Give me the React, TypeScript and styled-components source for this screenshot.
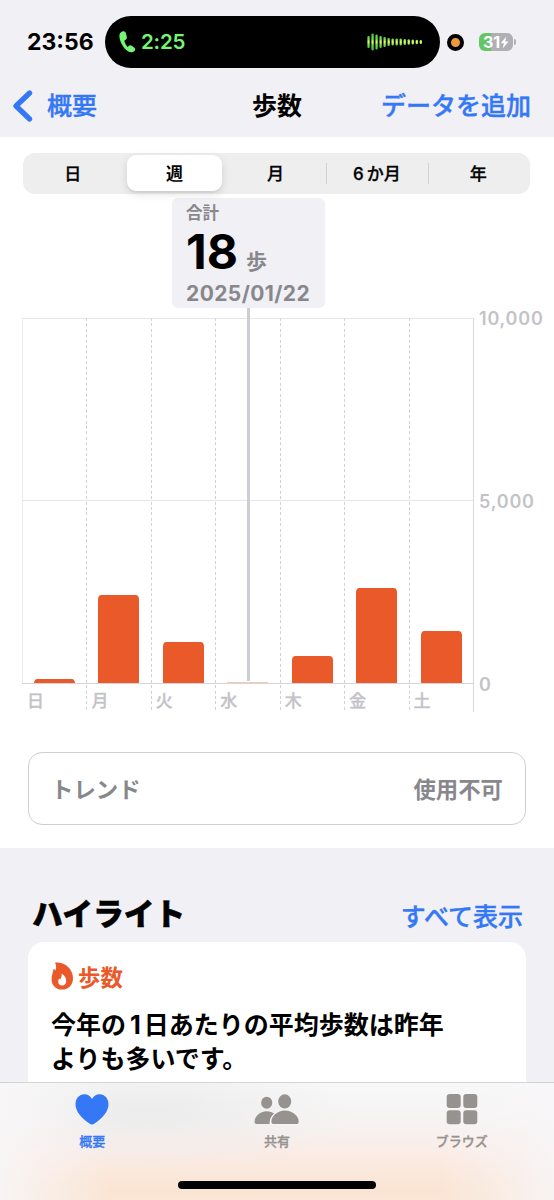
import React from 'react';
import styled, { createGlobalStyle } from 'styled-components';

const Global = createGlobalStyle`
  * { box-sizing: border-box; }
  body { margin: 0; background: #fff; }
`;

const C = {
  blue: '#3478f6',
  orange: '#ea592a',
  grey: '#88888c',
  light: '#c3c3c7',
  surface: '#f0f0f5',
};

const Screen = styled.div`
  width: 554px;
  height: 1200px;
  position: relative;
  overflow: hidden;
  display: flex;
  flex-direction: column;
  background: #fff;
  color: #000;
  font-family: Inter, 'Noto Sans CJK JP', sans-serif;
  white-space: nowrap;
`;

const Header = styled.header`
  flex: none;
  height: 137px;
  background: ${C.surface};
`;

const StatusBar = styled.div`
  display: flex;
  align-items: center;
  height: 68px;
  padding-top: 16px;
`;

const Clock = styled.div`
  width: 105px;
  padding-left: 27px;
  font-size: 23px;
  line-height: 28px;
  font-weight: 700;
`;

const Island = styled.div`
  width: 335px;
  height: 52px;
  border-radius: 26px;
  background: #000;
  display: flex;
  align-items: center;
  padding: 0 17px 0 14px;
`;

const CallTime = styled.span`
  margin-left: 5px;
  color: #76f575;
  font-size: 20.5px;
  line-height: 26px;
  padding-bottom: 1px;
  font-weight: 600;
  letter-spacing: -0.2px;
  flex: 1;
`;

const RecordDot = styled.div`
  width: 17px;
  height: 17px;
  margin-left: 7px;
  border-radius: 50%;
  border: 4px solid #000;
  background: #f09a37;
`;

const Battery = styled.div`
  width: 34px;
  height: 18px;
  margin-left: 15px;
  border-radius: 6px;
  background: linear-gradient(90deg, #65c466 0 12px, #b0b0b4 12px);
  color: #fff;
  display: flex;
  align-items: center;
  padding-left: 4px;
  font-size: 16px;
  font-weight: 700;
  line-height: 18px;
`;

const BatteryTip = styled.div`
  width: 2px;
  height: 6px;
  margin-left: 1px;
  border-radius: 0 2px 2px 0;
  background: #b0b0b4;
`;

const NavBar = styled.nav`
  display: grid;
  grid-template-columns: 1fr auto 1fr;
  align-items: center;
  height: 69px;
  padding: 7px 13px 0;
  font-size: 25px;
  line-height: 36px;
`;

const NavLink = styled.a<{ $end?: boolean }>`
  display: flex;
  align-items: center;
  gap: 14px;
  justify-self: ${(p) => (p.$end ? 'end' : 'start')};
  margin-right: ${(p) => (p.$end ? '10px' : '0')};
  color: ${C.blue};
  font-weight: 500;
  -webkit-text-stroke: 0.4px ${C.blue};
`;

const NavTitle = styled.h1`
  margin: 0;
  font-size: 25px;
  line-height: 36px;
  font-weight: 700;
`;

const Segments = styled.div`
  flex: none;
  display: grid;
  grid-template-columns: repeat(5, 1fr);
  width: 507px;
  height: 41px;
  margin: 16px 0 0 23px;
  border-radius: 12px;
  background: #eeeeef;
`;

const Segment = styled.button<{ $active?: boolean; $divider?: boolean }>`
  position: relative;
  display: flex;
  align-items: center;
  justify-content: center;
  margin: ${(p) => (p.$active ? '2px 4px 3px 3px' : '0')};
  padding: ${(p) => (p.$active ? '2px 0 0' : '1px 2px 0 0')};
  border: 0;
  border-radius: 9px;
  background: ${(p) => (p.$active ? '#fff' : 'transparent')};
  box-shadow: ${(p) => (p.$active ? '0 3px 8px rgba(0,0,0,.12), 0 2px 1px rgba(0,0,0,.04)' : 'none')};
  color: #000;
  font: ${(p) => (p.$active ? 700 : 500)} 17px/24px Inter, 'Noto Sans CJK JP', sans-serif;
  -webkit-text-stroke: ${(p) => (p.$active ? '0' : '0.3px #000')};
  &::before {
    content: '';
    display: ${(p) => (p.$divider ? 'block' : 'none')};
    position: absolute;
    left: -1px;
    top: 10px;
    width: 1px;
    height: 21px;
    background: #d2d2d5;
  }
`;

const Digit = styled.span<{ $before?: number; $after: number }>`
  margin: 0 ${(p) => p.$after}px 0 ${(p) => p.$before ?? 0}px;
`;

const Callout = styled.div`
  flex: none;
  width: 153px;
  height: 110px;
  margin: 4px 0 0 172px;
  padding: 5px 0 0 14px;
  border-radius: 6px;
  background: ${C.surface};
  color: ${C.grey};
  font-weight: 700;
`;

const CalloutLabel = styled.div`
  font-size: 16.5px;
  line-height: 20px;
`;

const CalloutValue = styled.div`
  display: flex;
  align-items: baseline;
  gap: 8px;
  height: 58px;
  font-size: 21px;
  line-height: 58px;
`;

const BigNumber = styled.strong`
  color: #000;
  font-size: 48px;
  font-weight: 700;
  letter-spacing: 0;
`;

const CalloutDate = styled.div`
  font-size: 21px;
  line-height: 26px;
  letter-spacing: 0.4px;
`;

const Chart = styled.section`
  flex: none;
  display: flex;
  margin: 10px 0 0 22px;
  height: 394px;
`;

const Plot = styled.div`
  position: relative;
  display: grid;
  grid-template-columns: repeat(7, 1fr);
  width: 452px;
  border-right: 1.5px solid #d9d9dc;
  background:
    linear-gradient(#e6e6e8, #e6e6e8) 0 0 / 100% 1px no-repeat,
    linear-gradient(#e6e6e8, #e6e6e8) 0 182px / 100% 1px no-repeat,
    linear-gradient(#d5d5d8, #d5d5d8) 0 365px / 100% 1px no-repeat,
    linear-gradient(#ececee, #ececee) 0 0 / 1px 366px no-repeat;
`;

const Day = styled.div<{ $first: boolean }>`
  display: flex;
  flex-direction: column;
  height: 394px;
  background: ${(p) =>
    p.$first
      ? 'none'
      : 'repeating-linear-gradient(#d2d2d5 0 3px, transparent 3px 5.4px) 0 0 / 1px 100% no-repeat'};
`;

const BarArea = styled.div`
  flex: none;
  display: flex;
  align-items: flex-end;
  height: 365px;
  padding-left: 11px;
`;

const Bar = styled.div<{ $faint?: boolean }>`
  width: 43px;
  border: solid #fff;
  border-width: 0 1px;
  border-radius: 4px 4px 0 0;
  background: ${(p) => (p.$faint ? '#f3c9b2' : C.orange)};
  background-clip: padding-box;
`;

const DayLabel = styled.div`
  padding: 7px 0 0 5px;
  color: ${C.light};
  font-size: 17px;
  line-height: 23px;
  font-weight: 500;
  -webkit-text-stroke: 0.3px ${C.light};
`;

const Scrubber = styled.div`
  position: absolute;
  left: 225px;
  top: -10px;
  width: 3px;
  height: 373px;
  background: #cdcdd2;
`;

const Axis = styled.div`
  display: flex;
  flex-direction: column;
  justify-content: space-between;
  height: 390px;
  margin: -11px 0 0 5px;
  color: ${C.light};
  font-size: 18px;
  line-height: 24px;
  font-weight: 600;
  letter-spacing: 0.8px;
`;

const Trend = styled.section`
  flex: none;
  display: flex;
  align-items: center;
  justify-content: space-between;
  width: 498px;
  height: 73px;
  margin: 40px 0 0 28px;
  padding: 0 22px 2px;
  border: 1.5px solid #cfcfd2;
  border-radius: 14px;
  color: ${C.grey};
  font-size: 22.4px;
  font-weight: 700;
`;

const Highlights = styled.section`
  flex: 1;
  margin-top: 23px;
  padding: 43px 28px 0;
  background: ${C.surface};
`;

const SectionHead = styled.div`
  display: flex;
  align-items: center;
  justify-content: space-between;
  height: 46px;
  padding: 0 3px 0 4px;
`;

const SectionTitle = styled.h2`
  margin: 0;
  font-size: 30.8px;
  line-height: 46px;
  font-weight: 800;
  -webkit-text-stroke: 0.5px #000;
`;

const ShowAll = styled.a`
  padding-top: 1px;
  color: ${C.blue};
  font-size: 25px;
  font-weight: 500;
  -webkit-text-stroke: 0.4px ${C.blue};
`;

const Card = styled.article`
  height: 180px;
  margin-top: 5px;
  padding: 17px 23px;
  border-radius: 16px;
  background: #fff;
`;

const CardKind = styled.div`
  display: flex;
  align-items: center;
  gap: 4px;
  height: 34px;
  color: ${C.orange};
  font-size: 22.4px;
  font-weight: 700;
`;

const CardText = styled.p`
  margin: 15px 0 0;
  font-size: 25px;
  line-height: 34px;
  font-weight: 700;
`;

const TabBar = styled.footer`
  position: absolute;
  left: 0;
  right: 0;
  bottom: 0;
  height: 118px;
  display: grid;
  grid-template-columns: repeat(3, 1fr);
  border-top: 1px solid #d4d4d7;
  background:
    linear-gradient(90deg, rgba(248,246,247,.9) 0, rgba(248,246,247,0) 110px 440px, rgba(248,246,248,.85) 554px),
    radial-gradient(ellipse 200px 60px at 150px 28px, rgba(235,235,235,.9), rgba(235,235,235,0)),
    linear-gradient(#f8f8f9 0, #f6f3f2 35%, #fbebe4 62%, #fae5d4 90%, #fae5d6 100%);
`;

const Tab = styled.a<{ $active?: boolean }>`
  display: flex;
  flex-direction: column;
  align-items: center;
  padding-top: 9px;
  color: ${(p) => (p.$active ? C.blue : '#969290')};
  font-size: 13px;
  line-height: 20px;
  font-weight: 500;
  -webkit-text-stroke: 0.3px ${(p) => (p.$active ? C.blue : '#969290')};
  svg { display: block; margin-bottom: 5px; }
`;

const HomeIndicator = styled.div`
  position: absolute;
  left: 178px;
  bottom: 11px;
  width: 198px;
  height: 8px;
  border-radius: 4px;
  background: #000;
`;

const wave = [12, 17, 15, 12, 10, 8, 7, 7, 7, 6, 5.5, 5, 4.5, 4];

const days = [
  { label: '日', bar: 4.5 },
  { label: '月', bar: 88 },
  { label: '火', bar: 41 },
  { label: '水', bar: 1, faint: true },
  { label: '木', bar: 27 },
  { label: '金', bar: 95 },
  { label: '土', bar: 52 },
];

const PhoneIcon = () => (
  <svg width="17" height="22" viewBox="0 0 17 22" fill="#76f575">
    <path d="M3.2.6C1.3 1.4.3 3.2.4 5.6c.3 5.2 4 11.800 8.600 14.700 2.400 1.500 4.900 1.300 6.500-.4 1-1.100 1-2.300-.1-3.200l-2.600-2c-1.100-.8-2.200-.7-3.100.2l-.6.6c-.4.300-.7.300-1 0-1.300-1.500-2.200-3.300-2.700-5.200-.1-.5 0-.8.500-1.100l.8-.5c1-.6 1.400-1.500 1.100-2.700L7 2.600C6.500.7 5 -.1 3.200.6Z" />
  </svg>
);

const Waveform = () => (
  <svg width="56" height="20" viewBox="0 0 56 20">
    <defs>
      <linearGradient id="wave" gradientUnits="userSpaceOnUse" x1="0" y1="1" x2="0" y2="19">
        <stop offset="0" stopColor="#3fc634" />
        <stop offset=".35" stopColor="#6fe04a" />
        <stop offset=".5" stopColor="#f0ff6a" />
        <stop offset=".65" stopColor="#6fe04a" />
        <stop offset="1" stopColor="#3fc634" />
      </linearGradient>
    </defs>
    {wave.map((h, i) => (
      <rect key={i} x={i * 4.02 + 0.4} y={10 - h / 2} width="2.3" height={h} rx="1.1" fill="url(#wave)" />
    ))}
  </svg>
);

const BoltIcon = () => (
  <svg width="9" height="13" viewBox="0 0 9 13" fill="#fff">
    <path d="M6.300.5.7 7.200h3.200L2.700 12.500 8.500 5.500H5.200z" />
  </svg>
);

const BackIcon = () => (
  <svg width="20" height="32" viewBox="0 0 20 32" fill="none" stroke={C.blue} strokeWidth="5.200" strokeLinecap="round" strokeLinejoin="round">
    <path d="M16.600 3 3 16l13.600 13" />
  </svg>
);

const FlameIcon = () => (
  <svg width="23" height="28" viewBox="0 0 23 28">
    <path d="M4 .6C13-.6 22 6 22 16.500c0 6.500-4.500 11.100-10.800 11.100C5 27.600.6 23.600.6 17.500.6 13.500 2 10.500 2.600 6.800c.7.4 1.400 1.200 1.800 1.800C5.200 7 5.600 3.500 4 .6Z" fill={C.orange} />
    <path d="M10.600 11.800c3 1.500 4.600 4.300 4.600 7.200 0 2.800-1.600 4.600-4 4.600s-4-1.600-4-4.100c0-1.300.4-2.300 1-3.100.4.400.6.700 1 .9 1.200-1.500 1.700-3.400 1.400-5.500Z" fill="#fff" />
  </svg>
);

const HeartIcon = () => (
  <svg width="34" height="34" viewBox="0 0 34 34" fill="currentColor">
    <path d="M17 32.600c-.7 0-1.500-.5-2.500-1.200C6.500 26 .5 19.600.5 12.200.5 6.500 4.300 2.200 9.400 2.200c3.300 0 6 1.700 7.600 4.700 1.600-3 4.300-4.700 7.600-4.700 5.100 0 8.900 4.300 8.900 10 0 7.400-6 13.800-14 19.200-1 .7-1.800 1.200-2.500 1.200Z" />
  </svg>
);

const PeopleIcon = () => (
  <svg width="46" height="34" viewBox="0 0 46 34" fill="currentColor">
    <ellipse cx="12.700" cy="10.700" rx="5.600" ry="6" />
    <path d="M.6 29.500c0-4.700 5.200-10.200 12.200-10.200 3 0 5.600.9 7.600 2.500-2.900 2.100-5 5.400-4.800 10.200H2.600C1.300 32 .6 31.200.6 29.500Z" />
    <ellipse cx="30.700" cy="9.400" rx="6.500" ry="7.100" />
    <path d="M17.400 29.400c0-5 5.800-10.900 13.600-10.900s13.700 5.900 13.700 10.900c0 1.800-.8 2.600-2.500 2.600H20c-1.700 0-2.600-.8-2.600-2.600Z" stroke="#f8f4f3" strokeWidth="2.400" paintOrder="stroke" />
  </svg>
);

const GridIcon = () => (
  <svg width="32" height="34" viewBox="0 0 32 34" fill="currentColor">
    <rect x=".7" y="2" width="14" height="14" rx="3" />
    <rect x="17.300" y="2" width="14" height="14" rx="3" />
    <rect x=".7" y="18.300" width="14" height="14" rx="3" />
    <rect x="17.300" y="18.300" width="14" height="14" rx="3" />
  </svg>
);

export default function App() {
  return (
    <Screen>
      <Global />
      <Header>
        <StatusBar>
          <Clock>23:56</Clock>
          <Island>
            <PhoneIcon />
            <CallTime>2:25</CallTime>
            <Waveform />
          </Island>
          <RecordDot />
          <Battery>
            31
            <BoltIcon />
          </Battery>
          <BatteryTip />
        </StatusBar>
        <NavBar>
          <NavLink>
            <BackIcon />
            概要
          </NavLink>
          <NavTitle>歩数</NavTitle>
          <NavLink $end>データを追加</NavLink>
        </NavBar>
      </Header>

      <Segments>
        <Segment>日</Segment>
        <Segment $active>週</Segment>
        <Segment>月</Segment>
        <Segment $divider>
          <Digit $after={3}>6</Digit>か月
        </Segment>
        <Segment $divider>年</Segment>
      </Segments>

      <Callout>
        <CalloutLabel>合計</CalloutLabel>
        <CalloutValue>
          <BigNumber>18</BigNumber>歩
        </CalloutValue>
        <CalloutDate>2025/01/22</CalloutDate>
      </Callout>

      <Chart>
        <Plot>
          {days.map((d, i) => (
            <Day key={d.label} $first={i === 0}>
              <BarArea>
                <Bar $faint={d.faint} style={{ height: d.bar }} />
              </BarArea>
              <DayLabel>{d.label}</DayLabel>
            </Day>
          ))}
          <Scrubber />
        </Plot>
        <Axis>
          <span>10,000</span>
          <span>5,000</span>
          <span>0</span>
        </Axis>
      </Chart>

      <Trend>
        <span>トレンド</span>
        <span>使用不可</span>
      </Trend>

      <Highlights>
        <SectionHead>
          <SectionTitle>ハイライト</SectionTitle>
          <ShowAll>すべて表示</ShowAll>
        </SectionHead>
        <Card>
          <CardKind>
            <FlameIcon />
            歩数
          </CardKind>
          <CardText>
            今年の
            <Digit $before={4} $after={3}>
              1
            </Digit>
            日あたりの平均歩数は昨年
            <br />
            よりも多いです。
          </CardText>
        </Card>
      </Highlights>

      <TabBar>
        <Tab $active>
          <HeartIcon />
          概要
        </Tab>
        <Tab>
          <PeopleIcon />
          共有
        </Tab>
        <Tab>
          <GridIcon />
          ブラウズ
        </Tab>
        <HomeIndicator />
      </TabBar>
    </Screen>
  );
}
